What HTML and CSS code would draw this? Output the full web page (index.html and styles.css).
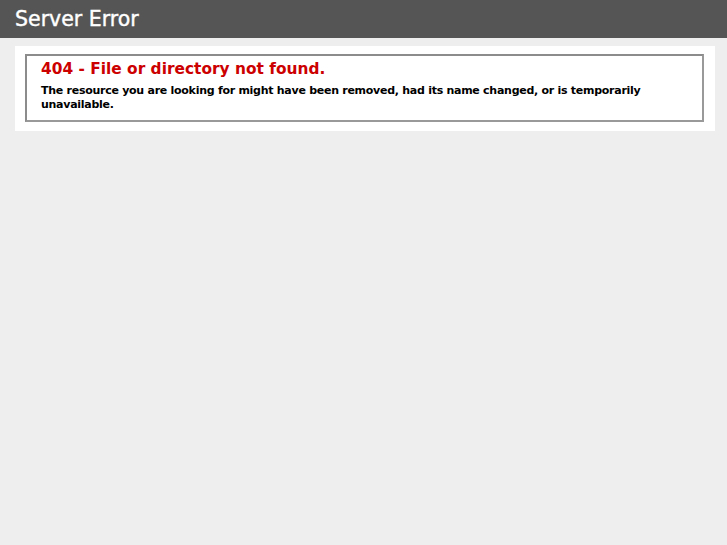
FILE: index.html
```html
<!DOCTYPE html>
<html>
<head>
<meta charset="utf-8">
<title>404 - File or directory not found.</title>
<link rel="stylesheet" href="styles.css">
</head>
<body>
<div class="header"><h1 class="title">Server Error</h1></div>
<div class="content">
  <div class="content-container">
    <fieldset class="box">
      <h2 class="err">404 - File or directory not found.</h2>
      <h3 class="msg">The resource you are looking for might have been removed, had its name changed, or is temporarily unavailable.</h3>
    </fieldset>
  </div>
</div>
</body>
</html>
```

FILE: styles.css
```css
html, body {
  margin: 0;
  padding: 0;
}
body {
  background: #eeeeee;
  font-family: "DejaVu Sans", Verdana, sans-serif;
  font-size: 11px;
}
.header {
  background: #555555;
  height: 38px;
  padding: 0 15px;
  display: flex;
  align-items: center;
  box-sizing: border-box;
}
.title {
  margin: 0;
  color: #ffffff;
  font-size: 20.5px;
  font-weight: normal;
  -webkit-text-stroke: 0.4px #ffffff;
}
.content {
  padding: 8px 12px 0 15px;
}
.content-container {
  background: #ffffff;
  padding: 8px 11px 9px 10px;
}
.box {
  margin: 0;
  border: 2px solid #999999;
  border-top-color: #8c8c8c;
  border-left-color: #8c8c8c;
  padding: 3px 15px 8px 14px;
  min-width: 0;
}
.err {
  margin: 0;
  color: #cc0000;
  font-size: 15.4px;
  font-weight: bold;
  line-height: 20px;
}
.msg {
  margin: 5px 0 0 0;
  color: #000000;
  font-size: 11px;
  letter-spacing: -0.27px;
  font-weight: bold;
  line-height: 14px;
}
```
